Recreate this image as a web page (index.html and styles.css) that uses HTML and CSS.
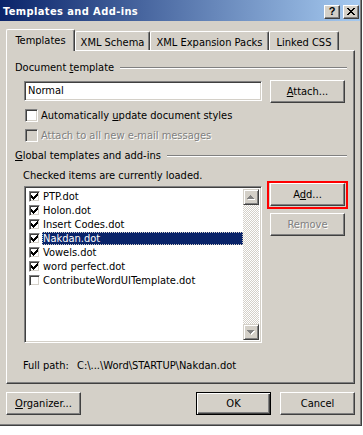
FILE: index.html
```html
<!DOCTYPE html>
<html>
<head>
<meta charset="utf-8">
<link rel="stylesheet" href="styles.css">
</head>
<body>
<div class="window">
  <div class="titlebar">
    <span class="title">Templates and Add-ins</span>
    <div class="cap-btns">
      <div class="cap-btn raised"><span class="qmark">?</span></div>
      <div class="cap-btn raised">
        <svg width="8" height="7" viewBox="0 0 8 7"><path d="M0 0h2v1h-2z M6 0h2v1h-2z M1 1h2v1h-2z M5 1h2v1h-2z M2 2h4v1h-4z M3 3h2v1h-2z M2 4h4v1h-4z M1 5h2v1h-2z M5 5h2v1h-2z M0 6h2v1h-2z M6 6h2v1h-2z" fill="#000"/></svg>
      </div>
    </div>
  </div>

  <div class="body">
    <div class="tabs">
      <div class="tab selected w-templates">Templates</div>
      <div class="tab w-schema">XML Schema</div>
      <div class="tab w-packs">XML Expansion Packs</div>
      <div class="tab w-css">Linked CSS</div>
    </div>

    <div class="panel">
      <div class="legend"><span>Document <u>t</u>emplate</span><span class="etch"></span></div>

      <div class="template-row">
        <div class="textfield sunken">Normal</div>
        <button type="button" class="btn attach"><u>A</u>ttach...</button>
      </div>

      <div class="check-row first">
        <span class="checkbox sunken"></span>
        <span>Automatically <u>u</u>pdate document styles</span>
      </div>
      <div class="check-row second disabled">
        <span class="checkbox sunken"></span>
        <span class="dis-text">Attach to all new e-mail messages</span>
      </div>

      <div class="legend global"><span><u>G</u>lobal templates and add-ins</span><span class="etch"></span></div>

      <div class="hint">Checked items are currently loaded.</div>

      <div class="addins-row">
        <div class="listbox sunken">
          <div class="items">
            <div class="item"><span class="lcheck sunken"><svg width="7" height="7" viewBox="0 0 7 7"><path class="ck" d="M6 0h1v1h-1z M5 1h2v1h-2z M0 2h1v1h-1z M4 2h3v1h-3z M0 3h2v1h-2z M3 3h3v1h-3z M0 4h5v1h-5z M1 5h3v1h-3z M2 6h1v1h-1z"/></svg></span><span class="label">PTP.dot</span></div>
            <div class="item"><span class="lcheck sunken"><svg width="7" height="7" viewBox="0 0 7 7"><path class="ck" d="M6 0h1v1h-1z M5 1h2v1h-2z M0 2h1v1h-1z M4 2h3v1h-3z M0 3h2v1h-2z M3 3h3v1h-3z M0 4h5v1h-5z M1 5h3v1h-3z M2 6h1v1h-1z"/></svg></span><span class="label">Holon.dot</span></div>
            <div class="item"><span class="lcheck sunken"><svg width="7" height="7" viewBox="0 0 7 7"><path class="ck" d="M6 0h1v1h-1z M5 1h2v1h-2z M0 2h1v1h-1z M4 2h3v1h-3z M0 3h2v1h-2z M3 3h3v1h-3z M0 4h5v1h-5z M1 5h3v1h-3z M2 6h1v1h-1z"/></svg></span><span class="label">Insert Codes.dot</span></div>
            <div class="item"><span class="lcheck sunken"><svg width="7" height="7" viewBox="0 0 7 7"><path class="ck" d="M6 0h1v1h-1z M5 1h2v1h-2z M0 2h1v1h-1z M4 2h3v1h-3z M0 3h2v1h-2z M3 3h3v1h-3z M0 4h5v1h-5z M1 5h3v1h-3z M2 6h1v1h-1z"/></svg></span><span class="label selected">Nakdan.dot</span></div>
            <div class="item"><span class="lcheck sunken"><svg width="7" height="7" viewBox="0 0 7 7"><path class="ck" d="M6 0h1v1h-1z M5 1h2v1h-2z M0 2h1v1h-1z M4 2h3v1h-3z M0 3h2v1h-2z M3 3h3v1h-3z M0 4h5v1h-5z M1 5h3v1h-3z M2 6h1v1h-1z"/></svg></span><span class="label">Vowels.dot</span></div>
            <div class="item"><span class="lcheck sunken"><svg width="7" height="7" viewBox="0 0 7 7"><path class="ck" d="M6 0h1v1h-1z M5 1h2v1h-2z M0 2h1v1h-1z M4 2h3v1h-3z M0 3h2v1h-2z M3 3h3v1h-3z M0 4h5v1h-5z M1 5h3v1h-3z M2 6h1v1h-1z"/></svg></span><span class="label">word perfect.dot</span></div>
            <div class="item"><span class="lcheck sunken"></span><span class="label">ContributeWordUITemplate.dot</span></div>
          </div>
          <div class="vscroll">
            <div class="sbtn">
              <svg width="8" height="5" viewBox="0 0 8 5"><path transform="translate(1 1)" fill="#fff" d="M3 0h1v1h-1z M2 1h3v1h-3z M1 2h5v1h-5z M0 3h7v1h-7z"/><path fill="#808080" d="M3 0h1v1h-1z M2 1h3v1h-3z M1 2h5v1h-5z M0 3h7v1h-7z"/></svg>
            </div>
            <div class="strack"></div>
            <div class="sbtn">
              <svg width="8" height="5" viewBox="0 0 8 5"><path transform="translate(1 1)" fill="#fff" d="M0 0h7v1h-7z M1 1h5v1h-5z M2 2h3v1h-3z M3 3h1v1h-1z"/><path fill="#808080" d="M0 0h7v1h-7z M1 1h5v1h-5z M2 2h3v1h-3z M3 3h1v1h-1z"/></svg>
            </div>
          </div>
        </div>

        <div class="side-btns">
          <div class="add-wrap">
            <button type="button" class="btn">A<u>d</u>d...</button>
            <span class="highlight-box"></span>
          </div>
          <button type="button" class="btn remove">Remove</button>
        </div>
      </div>

      <div class="path-row">
        <span class="path-label">Full path:</span>
        <span>C:\...\Word\STARTUP\Nakdan.dot</span>
      </div>
    </div>

    <div class="footer">
      <button type="button" class="btn"><u>O</u>rganizer...</button>
      <button type="button" class="btn default ok">OK</button>
      <button type="button" class="btn cancel">Cancel</button>
    </div>
  </div>
</div>
</body>
</html>
```

FILE: styles.css
```css
* { box-sizing: border-box; }

body {
  margin: 0;
  background: #ffffff;
  font-family: "DejaVu Sans Condensed", "Liberation Sans", Arial, sans-serif;
  font-size: 11px;
  color: #000;
}

u { text-decoration: underline; text-underline-offset: 1px; }

.window {
  width: 362px;
  height: 426px;
  background: #d4d0c8;
  border-right: 1px solid #404040;
  border-bottom: 1px solid #404040;
  box-shadow: inset -1px -1px #808080;
  display: flex;
  flex-direction: column;
}

.titlebar {
  height: 21px;
  margin-right: 1px;
  background: linear-gradient(to right, #0a246a 0%, #a6caf0 100%);
  display: flex;
  align-items: flex-start;
  padding: 0 1px 0 3px;
}

.title {
  flex: 1;
  color: #fff;
  font-weight: bold;
  letter-spacing: 0.4px;
  line-height: 13px;
  padding-top: 5px;
  white-space: nowrap;
}

.cap-btns {
  display: flex;
  gap: 3px;
  padding-top: 5px;
}

.raised {
  background: #d4d0c8;
  border: 1px solid;
  border-color: #fff #404040 #404040 #fff;
  box-shadow: inset -1px -1px #808080;
}

.sunken {
  border: 1px solid;
  border-color: #808080 #fff #fff #808080;
  box-shadow: inset 1px 1px #404040, inset -1px -1px #d4d0c8;
}

.cap-btn {
  width: 16px;
  height: 14px;
  display: flex;
  align-items: center;
  justify-content: center;
  padding-bottom: 1px;
}

.qmark {
  font-family: "Liberation Sans", Arial, sans-serif;
  font-weight: bold;
  font-size: 11px;
  line-height: 11px;
}

.body {
  flex: 1;
  display: flex;
  flex-direction: column;
  padding: 8px 6px 0 6px;
}

/* tabs */
.tabs {
  display: flex;
  align-items: flex-end;
  height: 21px;
  position: relative;
  z-index: 1;
}

.tab {
  height: 19px;
  padding-top: 4px;
  line-height: 13px;
  text-align: center;
  white-space: nowrap;
  background: #d4d0c8;
  border-left: 1px solid #fff;
  border-top: 1px solid #fff;
  border-right: 1px solid #404040;
  box-shadow: inset -1px 0 #808080;
  border-radius: 2px 2px 0 0;
}

.tab.selected {
  height: 22px;
  margin-bottom: -1px;
}

.w-templates { width: 69px; }
.w-schema { width: 75px; }
.w-packs { width: 119px; }
.w-css { width: 70px; }

.panel {
  height: 334px;
  border: 1px solid;
  border-color: #fff #404040 #404040 #fff;
  box-shadow: inset -1px -1px #808080;
  padding: 10px 7px 0 8px;
  display: flex;
  flex-direction: column;
}

.legend {
  display: flex;
  align-items: center;
  line-height: 13px;
  height: 13px;
  white-space: nowrap;
}

.etch {
  flex: 1;
  height: 2px;
  margin-left: 6px;
  border-top: 1px solid #808080;
  border-bottom: 1px solid #fff;
}

.legend.global { margin-top: 7px; }

.template-row {
  display: flex;
  align-items: flex-start;
  margin-top: 6px;
}

.textfield {
  width: 238px;
  height: 20px;
  margin-left: 9px;
  margin-top: 1px;
  background: #fff;
  padding: 2px 3px;
  line-height: 14px;
}

.btn {
  width: 75px;
  height: 23px;
  font: inherit;
  color: #000;
  background: #d4d0c8;
  border: 1px solid;
  border-color: #fff #404040 #404040 #fff;
  box-shadow: inset -1px -1px #808080;
  padding: 0;
  margin: 0;
  line-height: 13px;
  text-align: center;
  white-space: nowrap;
}

.attach { margin-left: 8px; }

.check-row {
  display: flex;
  align-items: center;
  height: 13px;
  line-height: 13px;
  margin-left: 10px;
  white-space: nowrap;
}

.check-row.first { margin-top: 6px; }
.check-row.second { margin-top: 7px; }

.checkbox {
  width: 13px;
  height: 13px;
  background: #fff;
  margin-right: 3px;
  flex: none;
}

.disabled .checkbox { background: #d4d0c8; }

.dis-text, .remove {
  color: #808080;
  text-shadow: 1px 1px #fff;
}

.hint {
  margin-top: 7px;
  margin-left: 8px;
  line-height: 13px;
  height: 13px;
  white-space: nowrap;
}

.addins-row {
  display: flex;
  align-items: flex-start;
  margin-top: 1px;
}

.listbox {
  width: 238px;
  height: 157px;
  margin-left: 9px;
  margin-top: 3px;
  background: #fff;
  display: flex;
  padding: 2px;
}

.items { flex: 1; min-width: 0; }

.item {
  height: 14px;
  display: flex;
  align-items: center;
}

.lcheck {
  width: 11px;
  height: 11px;
  margin-left: 2px;
  background: #fff;
  display: flex;
  align-items: center;
  justify-content: center;
  flex: none;
}

.ck { fill: #000; }

.label {
  flex: 1;
  margin-left: 2px;
  padding-left: 1px;
  line-height: 13px;
  height: 13px;
  white-space: nowrap;
}

.label.selected {
  background: #0a246a;
  color: #fff;
  outline: 1px dotted #d4d0c8;
  outline-offset: -1px;
}

.vscroll {
  width: 16px;
  display: flex;
  flex-direction: column;
}

.sbtn {
  height: 16px;
  background: #d4d0c8;
  border: 1px solid;
  border-color: #d4d0c8 #404040 #404040 #d4d0c8;
  box-shadow: inset 1px 1px #fff, inset -1px -1px #808080;
  display: flex;
  align-items: center;
  justify-content: center;
}

.strack {
  flex: 1;
  background: repeating-conic-gradient(#d4d0c8 0 25%, #fff 0 50%) 0 0 / 2px 2px;
}

.side-btns {
  display: flex;
  flex-direction: column;
  gap: 7px;
  margin-left: 8px;
}

.add-wrap { position: relative; display: flex; }

.highlight-box {
  position: absolute;
  left: -3px;
  top: -2px;
  right: -3px;
  bottom: -3px;
  border: 2px solid #ff0000;
  pointer-events: none;
}

.path-row {
  display: flex;
  margin-top: 16px;
  margin-left: 8px;
  line-height: 13px;
  height: 13px;
  white-space: nowrap;
}

.path-label { width: 54px; }

.footer {
  display: flex;
  margin-top: 8px;
}

.btn.default {
  border: 1px solid #000;
  box-shadow: inset 1px 1px #fff, inset -1px -1px #404040, inset -2px -2px #808080;
}

.ok { margin-left: auto; }
.cancel { margin-left: 9px; }
```
